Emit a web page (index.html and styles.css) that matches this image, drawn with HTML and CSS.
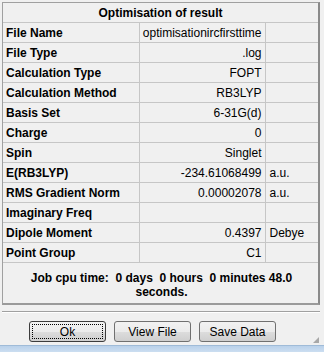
FILE: index.html
```html
<!DOCTYPE html>
<html lang="en">
<head>
  <meta charset="UTF-8" />
  <title>Optimisation of result</title>
  <link rel="stylesheet" href="styles.css">
</head>
<body>
  <div class="dialogo">
    <div class="caja-resultado">
      <table class="tabla-resultado">
        <colgroup>
          <col class="col-clave">
          <col class="col-valor">
          <col>
        </colgroup>
        <tr>
          <th class="titulo" colspan="3">Optimisation of result</th>
        </tr>
        <tr><td class="clave">File Name</td><td class="valor">optimisationircfirsttime</td><td class="unidad"></td></tr>
        <tr><td class="clave">File Type</td><td class="valor">.log</td><td class="unidad"></td></tr>
        <tr><td class="clave">Calculation Type</td><td class="valor">FOPT</td><td class="unidad"></td></tr>
        <tr><td class="clave">Calculation Method</td><td class="valor">RB3LYP</td><td class="unidad"></td></tr>
        <tr><td class="clave">Basis Set</td><td class="valor">6-31G(d)</td><td class="unidad"></td></tr>
        <tr><td class="clave">Charge</td><td class="valor">0</td><td class="unidad"></td></tr>
        <tr><td class="clave">Spin</td><td class="valor">Singlet</td><td class="unidad"></td></tr>
        <tr><td class="clave">E(RB3LYP)</td><td class="valor">-234.61068499</td><td class="unidad">a.u.</td></tr>
        <tr><td class="clave">RMS Gradient Norm</td><td class="valor">0.00002078</td><td class="unidad">a.u.</td></tr>
        <tr><td class="clave">Imaginary Freq</td><td class="valor"></td><td class="unidad"></td></tr>
        <tr><td class="clave">Dipole Moment</td><td class="valor">0.4397</td><td class="unidad">Debye</td></tr>
        <tr><td class="clave">Point Group</td><td class="valor">C1</td><td class="unidad"></td></tr>
      </table>
      <div class="tiempo">Job cpu time:&nbsp; 0 days&nbsp; 0 hours&nbsp; 0 minutes 48.0<br>seconds.</div>
    </div>

    <div class="separador"></div>

    <div class="botones">
      <button class="boton boton-foco"><span>Ok</span></button>
      <button class="boton"><span>View File</span></button>
      <button class="boton"><span>Save Data</span></button>
      <div class="agarre"></div>
    </div>
  </div>
  <div class="franja"></div>
</body>
</html>
```

FILE: styles.css
```css
body {
  margin: 0;
  width: 324px;
  height: 352px;
  background: #f0f0f0;
  font-family: "Liberation Sans", Arial, sans-serif;
  font-size: 12px;
  color: #000;
  overflow: hidden;
}

.dialogo {
  padding: 2px 4px 0 2px;
  height: 345px;
  box-sizing: border-box;
  position: relative;
}

.caja-resultado {
  height: 303px;
  box-sizing: border-box;
  border: 1px solid #a0a0a0;
  border-right: 2px solid #8a8a8a;
  border-bottom: 2px solid #9a9a9a;
  background: #f0f0f0;
}

.tabla-resultado {
  width: 100%;
  border-collapse: collapse;
  table-layout: fixed;
}

.col-clave {
  width: 136px;
}

.col-valor {
  width: 126px;
}

.tabla-resultado th,
.tabla-resultado td {
  height: 19px;
  padding: 0;
  border-bottom: 1px solid #c6c6c6;
  white-space: nowrap;
  overflow: hidden;
}

.titulo {
  font-weight: bold;
  text-align: center;
  font-size: 12px;
}

.tabla-resultado .clave {
  padding-left: 3px;
  font-weight: bold;
  border-right: 1px solid #c6c6c6;
}

.tabla-resultado .valor {
  padding-right: 3px;
  text-align: right;
  border-right: 1px solid #c6c6c6;
}

.tabla-resultado .unidad {
  padding-left: 4px;
}

.tiempo {
  padding: 8px 20px 0 22px;
  font-weight: bold;
  text-align: center;
  line-height: 14px;
}

.separador {
  margin-top: 6px;
  height: 1px;
  background: #a0a0a0;
  border-bottom: 1px solid #ffffff;
}

.botones {
  display: flex;
  gap: 8px;
  padding: 8px 0 0 27px;
}

.boton {
  width: 77px;
  height: 21px;
  padding: 2px;
  margin: 0;
  border: 1px solid #707070;
  border-radius: 3px;
  background: linear-gradient(#f2f2f2 0%, #ebebeb 50%, #dddddd 51%, #cfcfcf 100%);
  font-family: "Liberation Sans", Arial, sans-serif;
  font-size: 12px;
  color: #000;
}

.boton span {
  display: flex;
  align-items: center;
  justify-content: center;
  height: 100%;
  box-sizing: border-box;
  border: 1px dotted transparent;
}

.boton-foco {
  border-color: #3c3c3c;
}

.boton-foco span {
  border-color: #000;
}

.agarre {
  position: absolute;
  right: 5px;
  bottom: 2px;
  width: 6px;
  height: 6px;
  background:
    radial-gradient(circle, #a8a8a8 0.8px, transparent 1px) 0 0 / 2px 2px;
  clip-path: polygon(100% 0, 100% 100%, 0 100%);
}

.franja {
  height: 7px;
  background: linear-gradient(#b9d1ea, #cfe0f2);
  border-top: 1px solid #9fbbd8;
}
```
